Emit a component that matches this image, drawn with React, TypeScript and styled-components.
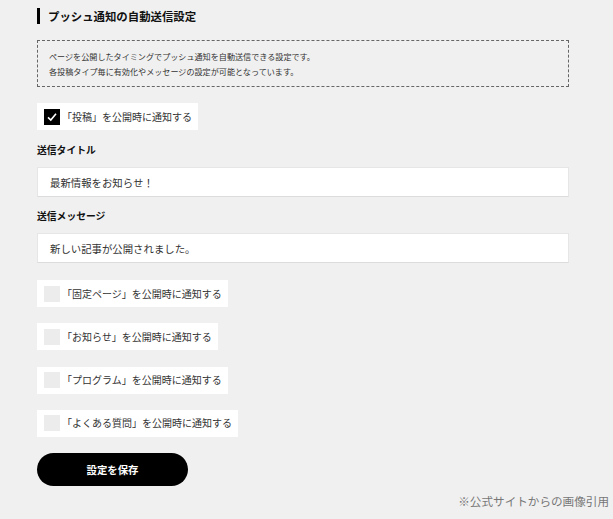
import React from "react";
import styled, { createGlobalStyle } from "styled-components";

const GlobalStyle = createGlobalStyle`
  html, body {
    margin: 0;
    padding: 0;
    background: #f0f0f0;
  }
  body {
    font-family: "Noto Sans CJK JP", "Noto Sans", sans-serif;
    color: #222;
  }
`;

const postTypes = [
  { label: "「投稿」を公開時に通知する", checked: true },
  { label: "「固定ページ」を公開時に通知する", checked: false },
  { label: "「お知らせ」を公開時に通知する", checked: false },
  { label: "「プログラム」を公開時に通知する", checked: false },
  { label: "「よくある質問」を公開時に通知する", checked: false },
];

const App = () => {
  const [first, ...rest] = postTypes;
  return (
    <>
      <GlobalStyle />
      <Page>
        <Settings>
          <Heading>プッシュ通知の自動送信設定</Heading>
          <Notice>
            ページを公開したタイミングでプッシュ通知を自動送信できる設定です。
            <br />
            各投稿タイプ毎に有効化やメッセージの設定が可能となっています。
          </Notice>

          <CheckRow $top={16}>
            <Box $checked={first.checked}>
              {first.checked && (
                <svg width="12" height="12" viewBox="0 0 12 12" aria-hidden>
                  <path
                    d="M2 6.3 L4.8 9 L10 2.8"
                    fill="none"
                    stroke="#fff"
                    strokeWidth="1.6"
                  />
                </svg>
              )}
            </Box>
            <CheckLabel>{first.label}</CheckLabel>
          </CheckRow>

          <Field $top={13}>
            <FieldLabel>送信タイトル</FieldLabel>
            <TextInput>最新情報をお知らせ！</TextInput>
          </Field>
          <Field $top={12}>
            <FieldLabel>送信メッセージ</FieldLabel>
            <TextInput>新しい記事が公開されました。</TextInput>
          </Field>

          <CheckList>
            {rest.map((item) => (
              <CheckRow key={item.label} $top={0}>
                <Box $checked={item.checked} />
                <CheckLabel>{item.label}</CheckLabel>
              </CheckRow>
            ))}
          </CheckList>

          <SaveButton type="button">設定を保存</SaveButton>
        </Settings>
        <Footnote>※公式サイトからの画像引用</Footnote>
      </Page>
    </>
  );
};

export default App;

const Page = styled.div`
  width: 613px;
  height: 519px;
  box-sizing: border-box;
  padding: 8px 4px 0 37px;
  display: flex;
  flex-direction: column;
  overflow: hidden;
`;

const Settings = styled.div`
  width: 532px;
  display: flex;
  flex-direction: column;
  align-items: flex-start;
`;

const Heading = styled.h2`
  margin: 0;
  height: 16px;
  display: flex;
  align-items: center;
  gap: 8px;
  font-size: 11.4px;
  font-weight: 700;
  line-height: 16px;
  color: #111;
  &::before {
    content: "";
    width: 3px;
    height: 16px;
    background: #000;
  }
`;

const Notice = styled.div`
  margin-top: 16px;
  width: 100%;
  box-sizing: border-box;
  height: 47px;
  padding: 8px 11px;
  border: 1px dashed #666;
  font-size: 8.1px;
  line-height: 15px;
  color: #333;
`;

const CheckRow = styled.label<{ $top: number }>`
  margin-top: ${(p) => p.$top}px;
  height: 27px;
  box-sizing: border-box;
  padding: 0 6px 0 7px;
  display: flex;
  align-items: center;
  gap: 2px;
  background: #fff;
`;

const Box = styled.span<{ $checked: boolean }>`
  width: 16px;
  height: 16px;
  display: flex;
  align-items: center;
  justify-content: center;
  background: ${(p) => (p.$checked ? "#000" : "#ececec")};
`;

const CheckLabel = styled.span`
  font-size: 10px;
  line-height: 14px;
  color: #333;
`;

const Field = styled.div<{ $top: number }>`
  margin-top: ${(p) => p.$top}px;
  width: 100%;
  display: flex;
  flex-direction: column;
  gap: 10px;
`;

const FieldLabel = styled.div`
  font-size: 9.8px;
  font-weight: 700;
  line-height: 14px;
  color: #111;
`;

const TextInput = styled.div`
  height: 30px;
  box-sizing: border-box;
  padding: 0 12px;
  display: flex;
  align-items: center;
  background: #fff;
  border: 1px solid #e6e6e6;
  border-bottom-color: #dcdcdc;
  font-size: 10.4px;
  color: #333;
`;

const CheckList = styled.div`
  margin-top: 17px;
  display: flex;
  flex-direction: column;
  align-items: flex-start;
  gap: 16.3px;
`;

const SaveButton = styled.button`
  margin-top: 16px;
  width: 151px;
  height: 33px;
  border: none;
  border-radius: 17px;
  background: #000;
  color: #fff;
  font-family: inherit;
  font-size: 10.4px;
  font-weight: 700;
  cursor: pointer;
`;

const Footnote = styled.div`
  margin-top: 7px;
  align-self: flex-end;
  font-size: 11.6px;
  line-height: 16px;
  color: #777;
`;
